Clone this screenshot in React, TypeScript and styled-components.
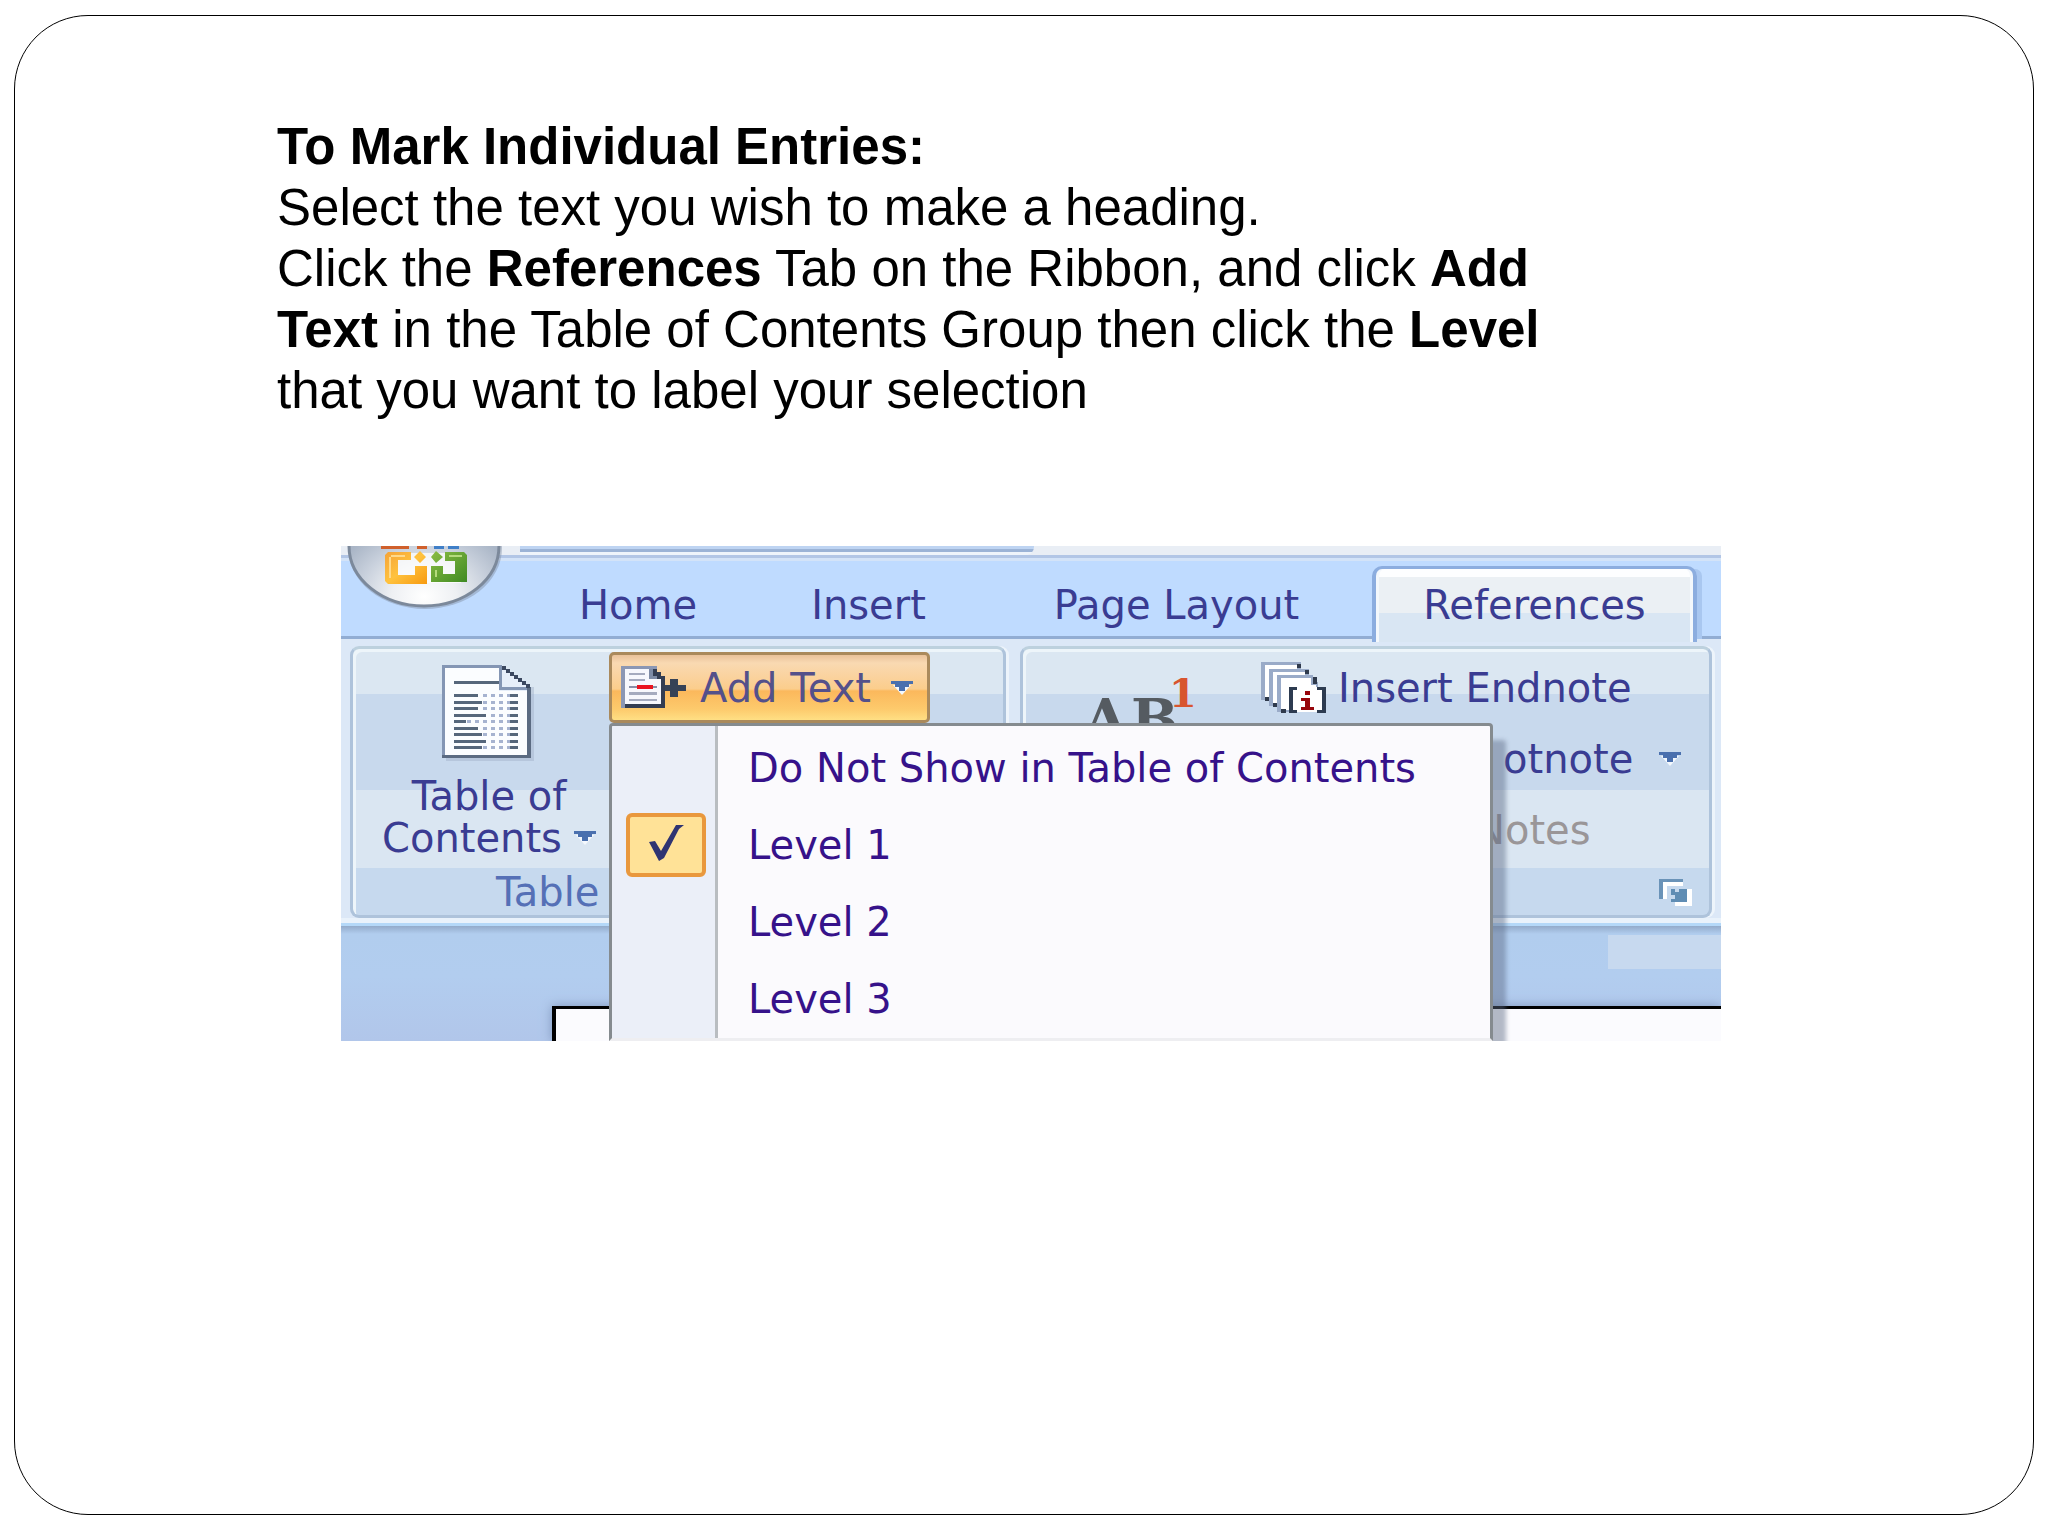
import React, { useState } from "react";
import styled, { createGlobalStyle } from "styled-components";

const GlobalStyle = createGlobalStyle`
  *, *::before, *::after { box-sizing: border-box; }
  body { margin: 0; background: #fff; }
  button { font: inherit; color: inherit; background: none; border: 0; padding: 0; margin: 0; text-align: left; }
`;

const uiFont = `"DejaVu Sans", Verdana, sans-serif`;

const Page = styled.div`
  display: flex;
  min-height: 100vh;
  padding: 15px 14px 21px;
`;

const Slide = styled.main`
  flex: 1;
  border: 1px solid #000;
  border-radius: 74px;
  padding: 100px 312px 99px 262px;
`;

const Copy = styled.section`
  max-width: 1320px;
  color: #000;
  font-family: "Liberation Sans", Arial, sans-serif;
  font-size: 51px;
  line-height: 61px;

  h1, p { margin: 0; font-size: inherit; }
`;

const Figure = styled.figure`
  position: relative;
  margin: 125px 0 0 64px;
  overflow: hidden;
  font-family: ${uiFont};
  font-size: 40px;
  color: #3a3c92;
  white-space: nowrap;
`;

const TitleBar = styled.div`
  display: flex;
  height: 15px;
  padding-left: 179px;
  background: linear-gradient(#e9eef5 9px, #b2c6e6 9px 12px, #d3e3f8 12px);
`;

const QuickAccess = styled.div`
  width: 514px;
  height: 9px;
  background: linear-gradient(#bed4f2 3px, #9bb3d6 3px 6px, #eef4fb 6px);
  border-bottom-right-radius: 8px;
`;

const TabStrip = styled.nav`
  display: grid;
  grid-template-columns: 236px 225px 391px 325px;
  height: 78px;
  padding: 5px 0 0 179px;
  background: #bfdbff;
  box-shadow: inset 0 -3px #92add3;
`;

const Tab = styled.button<{ $active?: boolean }>`
  text-align: center;
  line-height: 73px;
  border: 4px solid transparent;
  border-width: 3px 4px 0;
  border-radius: 10px 10px 0 0;
  ${(p) =>
    p.$active &&
    `
    border-color: #8caddf;
    background: linear-gradient(#fdfeff 8px, #ebf0f4 8px 44px, #d9e6f3 44px);
    box-shadow: 8px 0 0 -3px #a9c7f0, inset 3px 0 #f4f8fc, inset -3px 0 #f4f8fc;
  `}
`;

const Ribbon = styled.div`
  display: flex;
  gap: 14px;
  padding: 7px 9px 8px;
  background: linear-gradient(to top, #b4d8f8 3px, #e9f2fb 3px 8px, #dce8f7 8px);
`;

const Group = styled.section<{ $width?: number }>`
  flex: ${(p) => (p.$width ? `0 0 ${p.$width}px` : "1")};
  height: 272px;
  display: flex;
  flex-direction: column;
  border: 3px solid #aec3db;
  border-top-color: #bdd1de;
  border-radius: 9px;
  background: linear-gradient(#dbe7f2 45px, #c8d9ed 45px 141px, #dae6f2 141px 219px, #c6d9ee 219px);
  box-shadow: inset 3px 3px #edf5fa, 3px 0 #edf4fb;
`;

const GroupBody = styled.div`
  display: flex;
  align-items: flex-start;
  height: 219px;
`;

const GroupFooter = styled.div<{ $end?: boolean }>`
  display: flex;
  align-items: center;
  justify-content: ${(p) => (p.$end ? "flex-end" : "flex-start")};
  height: 47px;
  padding: 0 17px 0 143px;
  line-height: 50px;
  color: #5570b6;
`;

const LargeButton = styled.button`
  display: flex;
  flex-direction: column;
  align-items: center;
  width: 256px;
  padding: 16px 0 0 16px;
  line-height: 42px;

  > svg { margin-bottom: 13px; }
`;

const Split = styled.span`
  display: flex;
  align-items: center;
  gap: 12px;
`;

const AddTextButton = styled.button`
  display: flex;
  align-items: center;
  width: 321px;
  height: 71px;
  margin-top: 3px;
  padding-left: 9px;
  border: 3px solid #aa8a5c;
  border-radius: 5px;
  background: linear-gradient(#e9c29a, #f9d9b2 8px, #fbcd8c 34px, #fbb85c 36px, #fdca6c 54px, #ffdf84);
  line-height: 62px;
  color: #54508a;
  gap: 14px;
`;

const FootnoteButton = styled.button`
  width: 238px;
  padding: 24px 0 0 60px;
`;

const Commands = styled.div`
  display: flex;
  flex-direction: column;
  padding-top: 3px;
`;

const Command = styled.button<{ $indent?: number; $dim?: boolean }>`
  display: flex;
  align-items: center;
  gap: 12px;
  height: 71px;
  padding-left: ${(p) => p.$indent ?? 0}px;
  color: ${(p) => (p.$dim ? "#9a9698" : "inherit")};
`;

const MenuArrow = styled.span<{ $space: number }>`
  display: flex;
  margin-left: ${(p) => p.$space}px;
`;

const Workspace = styled.div`
  height: 115px;
  padding: 80px 0 0 211px;
  background:
    linear-gradient(#c7d9ef, #c7d9ef) right 9px / 113px 34px no-repeat,
    linear-gradient(#93abca, #b1cdee 8px, #b2cdef 50px, #b1c6ea);
  background-repeat: no-repeat;
`;

const Paper = styled.div`
  height: 35px;
  border: solid #000;
  border-width: 3px 0 0 4px;
  background: #fbfbfe;
  box-shadow: 0 0 10px #7f97bd;
`;

const Menu = styled.div`
  position: absolute;
  top: 177px;
  left: 268px;
  width: 884px;
  padding: 3px 0 1px;
  border: 3px solid #858b8f;
  border-bottom-color: #eeeef1;
  border-radius: 4px 4px 0 0;
  background: linear-gradient(to right, #ebeff8 103px, #b9bdc1 103px 106px, #fbfafd 106px);
  box-shadow: 14px 16px 4px -1px rgba(90, 105, 130, 0.45);
  color: #36128a;
`;

const MenuItem = styled.button`
  display: grid;
  grid-template-columns: 108px 1fr;
  align-items: center;
  width: 100%;
  height: 77px;
  column-gap: 28px;
`;

const CheckCell = styled.span`
  display: flex;
  justify-content: center;
`;

const CheckBox = styled.span`
  display: flex;
  align-items: center;
  justify-content: center;
  width: 80px;
  height: 64px;
  border: 4px solid #e9983d;
  border-radius: 6px;
  background: #ffe297;
`;

const OfficeButton = styled.button`
  position: absolute;
  top: 0;
  left: 4px;
  display: flex;
`;

const Arrow = () => (
  <svg width="22" height="14" viewBox="0 0 22 14" aria-hidden="true">
    <path d="M2 4 L11 14 L20 4 Z" fill="#f4f8fd" />
    <path d="M0 0 H22 V3 H18 V6 H14 V10 H8 V6 H4 V3 H0 Z" fill="#4a70ae" />
  </svg>
);

const OfficeLogo = () => (
  <svg width="160" height="66" viewBox="0 0 160 66" aria-hidden="true">
    <defs>
      <radialGradient id="orb" cx="0.5" cy="0.92" r="0.62">
        <stop offset="0" stopColor="#ffffff" />
        <stop offset="0.35" stopColor="#eef0f3" />
        <stop offset="0.7" stopColor="#c8d0dc" />
        <stop offset="1" stopColor="#a9b5c6" />
      </radialGradient>
      <linearGradient id="amber" x1="0" y1="0" x2="1" y2="1">
        <stop offset="0" stopColor="#f5a238" />
        <stop offset="0.5" stopColor="#ffc23e" />
        <stop offset="1" stopColor="#f79a10" />
      </linearGradient>
      <linearGradient id="leaf" x1="0" y1="0" x2="1" y2="1">
        <stop offset="0" stopColor="#8cbd45" />
        <stop offset="1" stopColor="#3f8a22" />
      </linearGradient>
    </defs>
    <ellipse cx="80" cy="2" rx="77" ry="61" fill="#8795ab" opacity="0.5" />
    <ellipse cx="79" cy="0" rx="75" ry="60" fill="url(#orb)" stroke="#7c899b" strokeWidth="3" />
    <path d="M45 7 H116 V37 H45 Z" fill="#fdfdfd" opacity="0.75" />
    <path d="M36 0 H64 V3 H36 Z M72 0 H82 V3 H72 Z" fill="#d0602c" />
    <path d="M89 0 H99 V3 H89 Z M103 0 H114 V3 H103 Z" fill="#3f7fc8" />
    <path
      fillRule="evenodd"
      d="M43 6 H66 V14 H53 V29 H70 V20 H82 V38 H43 L40 35 V9 Z M75 5 L81 11 L75 17 L69 11 Z"
      fill="url(#amber)"
    />
    <path
      fillRule="evenodd"
      d="M100 6 H119 L122 9 V36 H86 V20 H98 V28 H110 V15 H100 Z M91 5 L98 11 L91 17 L86 11 Z"
      fill="url(#leaf)"
    />
    <path d="M46 10 H60 M45 11 V32" stroke="#ffd98a" strokeWidth="2" fill="none" />
    <path d="M104 10 H117 M91 24 V31" stroke="#b5db7d" strokeWidth="2" fill="none" />
  </svg>
);

const tocRows = [36, 40, 36, 44, 24, 36, 40, 44, 40];

const TocIcon = () => (
  <svg width="94" height="97" viewBox="0 0 94 97" shapeRendering="crispEdges" aria-hidden="true">
    <path d="M4 4 H92 V96 H4 Z" fill="#9fb0c8" opacity="0.45" />
    <path d="M60 0 H94 V22 H88 Z" fill="#dbe7f2" />
    <path d="M0 0 H60 V23 H88 V93 H0 Z" fill="#fbfdff" />
    <path d="M60 0 L88 22 V26 H57 V0 Z" fill="#e6eef9" />
    <path d="M0 0 H60 V3 H3 V93 H0 Z" fill="#8496b4" />
    <path d="M57 0 H60 V22 H88 V25 H57 Z" fill="#8496b4" />
    <path d="M85 22 H89 V93 H0 V90 H85 Z" fill="#5b6b82" />
    {[0, 1, 2, 3, 4, 5, 6].map((i) => (
      <rect key={i} x={60 + i * 4} y={1 + i * 3} width="4" height="4" fill="#3b4860" />
    ))}
    <rect x="12" y="16" width="45" height="3" fill="#56677b" />
    {tocRows.map((end, i) => {
      const y = 29 + Math.round(i * 6.5);
      return (
        <g key={i}>
          <rect x="12" y={y} width={end - 12} height="3" fill="#56677b" />
          {[25, 33, 41, 49, 57, 65].filter((x) => x >= end).map((x) => (
            <rect key={x} x={x} y={y} width="4" height="3" fill="#a6b3d0" />
          ))}
          <rect x="68" y={y} width="8" height="3" fill="#56677b" />
        </g>
      );
    })}
  </svg>
);

const AddTextIcon = () => (
  <svg width="65" height="43" viewBox="0 0 65 43" shapeRendering="crispEdges" aria-hidden="true">
    <path d="M0 0 H36 V42 H0 Z" fill="#8b97b4" />
    <path d="M4 3 H28 V13 H40 V39 H4 Z" fill="#f7f8fd" />
    <path d="M28 3 H32 V10 H40 V13 H28 Z" fill="#7d8ba6" />
    <path d="M32 3 H36 V6 H40 V10 H44 V42 H4 V38 H40 V13 H36 V10 H32 Z" fill="#333d52" />
    <path d="M8 7 H24 V9 H8 Z M8 13 H24 V15 H8 Z M8 26 H36 V29 H8 Z M8 33 H36 V35 H8 Z" fill="#a5abbf" />
    <path d="M8 20 H36 V22 H8 Z" fill="#8a8fa8" />
    <path d="M16 19 H32 V23 H16 Z" fill="#ea1420" />
    <path d="M44 19 H49 V13 H57 V19 H65 V25 H57 V31 H49 V25 H44 Z" fill="#364256" />
  </svg>
);

const EndnoteIcon = () => (
  <svg width="65" height="52" viewBox="0 0 65 52" shapeRendering="crispEdges" aria-hidden="true">
    <path d="M0 0 H40 V38 H0 Z" fill="#9aabc8" />
    <path d="M4 3 H36 V35 H4 Z" fill="#fff" />
    <path d="M36 2 H40 V6 H36 Z M4 35 H8 V39 H4 Z" fill="#2f3a4c" />
    <path d="M8 7 H48 V44 H8 Z" fill="#9aabc8" />
    <path d="M12 10 H44 V41 H12 Z" fill="#fff" />
    <path d="M44 8 H48 V12 H44 Z M12 41 H16 V45 H12 Z" fill="#2f3a4c" />
    <path d="M16 13 H52 V20 H57 V50 H16 Z" fill="#9aabc8" />
    <path d="M20 16 H50 V23 H55 V48 H20 Z" fill="#fff" />
    <path d="M52 15 H56 V22 H52 Z M20 47 H25 V51 H20 Z" fill="#2f3a4c" />
    <path d="M28 25 H61 V50 H28 Z" fill="#fff" />
    <path d="M28 25 H36 V28 H32 V48 H36 V51 H28 Z M56 25 H65 V51 H56 V48 H61 V28 H56 Z" fill="#2d3b50" />
    <path d="M44 29 H49 V33 H44 Z M40 36 H49 V45 H53 V48 H40 V45 H44 V39 H40 Z" fill="#97060c" />
  </svg>
);

const FootnoteIcon = () => (
  <svg width="120" height="62" viewBox="0 0 120 62" fontFamily="DejaVu Serif, serif" fontWeight="bold" aria-hidden="true">
    <text x="1" y="66" fontSize="56" fill="#555b61">A</text>
    <text x="48" y="66" fontSize="56" fill="#555b61">B</text>
    <text x="86" y="34" fontSize="40" fill="#d8552f">1</text>
  </svg>
);

const LauncherIcon = () => (
  <svg width="33" height="27" viewBox="0 0 33 27" shapeRendering="crispEdges" aria-hidden="true">
    <path d="M4 3 H24 V7 H8 V20 H4 Z M28 10 H33 V27 H16 V23 H28 Z" fill="#fff" />
    <path d="M0 0 H24 V3 H4 V20 H0 Z" fill="#6a93b8" />
    <path d="M12 10 H16 V13 H20 V10 H28 V23 H12 V20 H16 V16 H12 Z" fill="#5f8db4" />
  </svg>
);

const CheckMark = () => (
  <svg width="38" height="42" viewBox="0 0 38 42" aria-hidden="true">
    <path d="M2 18 L8 17 L14 27 L29 1 L37 1 L32 5 L17 34 L12 37 Z" fill="#2f3472" />
  </svg>
);

const tabs = ["Home", "Insert", "Page Layout", "References"];
const levels = ["Do Not Show in Table of Contents", "Level 1", "Level 2", "Level 3"];

export default function App() {
  const [level, setLevel] = useState("Level 1");

  return (
    <>
      <GlobalStyle />
      <Page>
        <Slide>
          <Copy>
            <h1>To Mark Individual Entries:</h1>
            <p>Select the text you wish to make a heading.</p>
            <p>
              Click the <b>References</b> Tab on the Ribbon, and click <b>Add Text</b> in the Table of
              Contents Group then click the <b>Level</b> that you want to label your selection
            </p>
          </Copy>

          <Figure>
            <TitleBar>
              <QuickAccess />
            </TitleBar>
            <TabStrip>
              {tabs.map((name) => (
                <Tab key={name} type="button" $active={name === "References"}>
                  {name}
                </Tab>
              ))}
            </TabStrip>

            <Ribbon>
              <Group $width={656}>
                <GroupBody>
                  <LargeButton type="button">
                    <TocIcon />
                    <span>Table of</span>
                    <Split>
                      Contents <Arrow />
                    </Split>
                  </LargeButton>
                  <AddTextButton type="button" aria-haspopup="menu" aria-expanded="true">
                    <AddTextIcon />
                    Add Text
                    <MenuArrow $space={6}>
                      <Arrow />
                    </MenuArrow>
                  </AddTextButton>
                </GroupBody>
                <GroupFooter>Table</GroupFooter>
              </Group>

              <Group>
                <GroupBody>
                  <FootnoteButton type="button" aria-label="Footnote">
                    <FootnoteIcon />
                  </FootnoteButton>
                  <Commands>
                    <Command type="button">
                      <EndnoteIcon />
                      Insert Endnote
                    </Command>
                    <Command type="button" $indent={242}>
                      otnote
                      <MenuArrow $space={14}>
                        <Arrow />
                      </MenuArrow>
                    </Command>
                    <Command type="button" $indent={214} $dim>
                      Notes
                    </Command>
                  </Commands>
                </GroupBody>
                <GroupFooter $end>
                  <button type="button" aria-label="Options">
                    <LauncherIcon />
                  </button>
                </GroupFooter>
              </Group>
            </Ribbon>

            <Workspace>
              <Paper />
            </Workspace>

            <OfficeButton type="button" aria-label="Office">
              <OfficeLogo />
            </OfficeButton>

            <Menu role="menu">
              {levels.map((name) => (
                <MenuItem
                  key={name}
                  type="button"
                  role="menuitemradio"
                  aria-checked={name === level}
                  onClick={() => setLevel(name)}
                >
                  <CheckCell>
                    {name === level && (
                      <CheckBox>
                        <CheckMark />
                      </CheckBox>
                    )}
                  </CheckCell>
                  <span>{name}</span>
                </MenuItem>
              ))}
            </Menu>
          </Figure>
        </Slide>
      </Page>
    </>
  );
}
